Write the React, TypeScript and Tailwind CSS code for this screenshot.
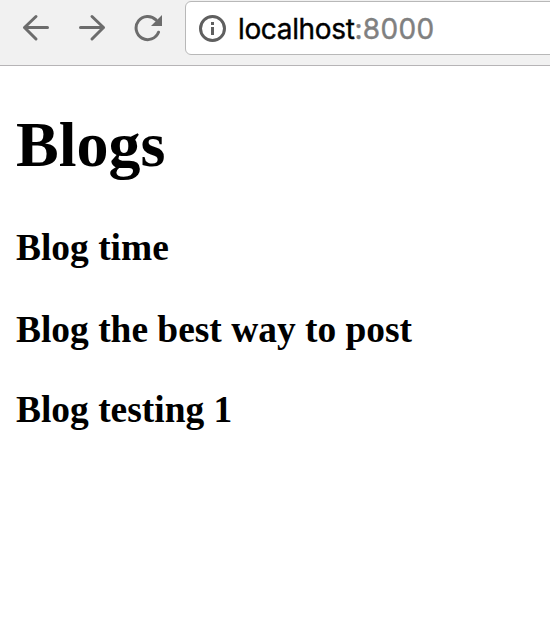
export default function App() {
  return (
    <div className="flex h-[618px] w-[550px] flex-col overflow-hidden bg-white">
      <header className="flex h-[66px] shrink-0 items-start border-b border-[#b6b4b6] bg-[#f1f1f1]">
        <nav className="flex h-14 w-[185px] shrink-0 items-center gap-7 pl-[22px] text-[#6c6c6c]">
          <svg width="28" height="28" viewBox="0 0 28 28" fill="none" stroke="currentColor" strokeWidth="3" strokeLinecap="round" strokeLinejoin="round">
            <path d="M25.500 13.500H2.500M14 2.500l-11.500 11 11.500 11.500" />
          </svg>
          <svg width="28" height="28" viewBox="0 0 28 28" fill="none" stroke="currentColor" strokeWidth="3" strokeLinecap="round" strokeLinejoin="round">
            <path d="M2.500 13.500h23M14 2.500l11.500 11L14 25" />
          </svg>
          <svg width="28" height="28" viewBox="0 0 28 28" fill="none" stroke="currentColor" strokeWidth="3" strokeLinecap="round">
            <path d="M24.500 18.200A11.600 11.600 0 1 1 22 5.900" />
            <path d="M28 1v11H17z" fill="currentColor" stroke="none" />
          </svg>
        </nav>
        <div className="mt-px flex h-[54px] w-[380px] shrink-0 items-center rounded-l-[6px] border border-[#b8b8b8] bg-white pl-[13px]">
          <svg width="27" height="27" viewBox="0 0 27 27" fill="none" stroke="#5f5f5f" strokeWidth="3">
            <circle cx="13.500" cy="13.500" r="12" />
            <path d="M13.500 12v8M13.500 7v3" />
          </svg>
          <span className="ml-3 flex pt-px font-[Inter,sans-serif] text-[28px] leading-8 text-black [-webkit-text-stroke:0.4px]">
            <span className="tracking-[-0.35px]">localhost</span>
            <span className="tracking-[0.3px] text-[#808080]">:8000</span>
          </span>
        </div>
      </header>
      <main className="pl-4 pt-[42px] font-['Liberation_Serif',serif] font-bold text-black">
        <h1 className="text-[64px] leading-[74px]">Blogs</h1>
        <h3 className="mt-[44px] text-[37.440px] leading-[44px]">Blog time</h3>
        <h3 className="mt-[38px] text-[37.440px] leading-[44px]">Blog the best way to post</h3>
        <h3 className="mt-[36px] text-[37.440px] leading-[44px]">Blog testing 1</h3>
      </main>
    </div>
  );
}
